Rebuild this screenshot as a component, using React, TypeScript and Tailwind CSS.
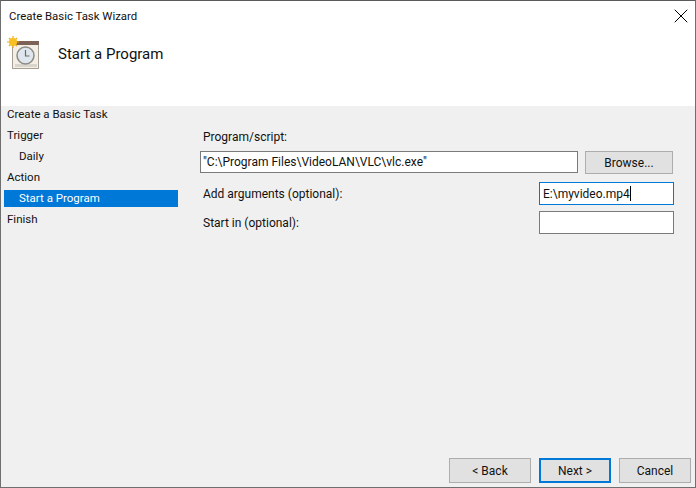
import { X } from "lucide-react";

const steps = [
  { label: "Create a Basic Task", indent: false },
  { label: "Trigger", indent: false },
  { label: "Daily", indent: true },
  { label: "Action", indent: false },
  { label: "Start a Program", indent: true, active: true },
  { label: "Finish", indent: false },
];

function TaskIcon() {
  return (
    <svg width="34" height="34" viewBox="0 0 34 34" className="shrink-0">
      <rect x="5.5" y="5.5" width="26" height="27" fill="#f3efe6" stroke="#a89f94" />
      <rect x="5" y="5" width="27" height="4" fill="#7d6257" />
      <rect x="8" y="28" width="22" height="3" fill="#d9d4cc" />
      <circle cx="18.5" cy="19.5" r="8.5" fill="#dfe6ee" stroke="#8c8c84" strokeWidth="1.5" />
      <path d="M18.5 14v6h4" fill="none" stroke="#6b6b6b" strokeWidth="1.2" />
      <g stroke="#f0a818" strokeWidth="1.2">
        <path d="M6 0v12M0 6h12M2 2l8 8M10 2L2 10" />
      </g>
      <circle cx="6" cy="6" r="4" fill="#f8c020" />
    </svg>
  );
}

function WizardButton({ label, primary, width }: { label: string; primary?: boolean; width: string }) {
  return (
    <button
      className={[
        "h-[25px] bg-[#e1e1e1] text-[12px] text-[#111]",
        width,
        primary ? "border-2 border-[#0078d7]" : "border border-[#adadad]",
      ].join(" ")}
    >
      {label}
    </button>
  );
}

export default function App() {
  return (
    <div
      className="flex h-[488px] w-[696px] flex-col overflow-hidden border-x border-t border-b border-x-[#6f6f6f] border-t-[#5a5a5a] border-b-[#6f6f6f] bg-white text-[12px] text-[#111]"
      style={{ fontFamily: 'Roboto, sans-serif' }}
    >
      {/* Title + header strip */}
      <div className="flex h-[105px] shrink-0 flex-col bg-white">
        <div className="flex h-[30px] items-center justify-between pl-[8px] pr-[2px]">
          <span className="pt-[1px] text-[11.4px]">Create Basic Task Wizard</span>
          <X size={24} strokeWidth={1} className="text-black" />
        </div>
        <div className="mt-[5px] flex items-center pl-[6px]">
          <TaskIcon />
          <span className="ml-[17px] pt-[2px] text-[15px]">Start a Program</span>
        </div>
      </div>

      <div className="flex min-h-0 flex-1 bg-[#f0f0f0]">
        {/* Steps rail */}
        <div className="w-[177px] shrink-0 pl-[3px] text-[11.5px]">
          {steps.map((s) => (
            <div
              key={s.label}
              className={[
                "mb-[4px] flex h-[17px] items-center",
                s.indent ? "pl-[15px]" : "pl-[3px]",
                s.active ? "bg-[#0078d7] text-white" : "",
              ].join(" ")}
            >
              {s.label}
            </div>
          ))}
        </div>

        {/* Form + buttons */}
        <div className="flex min-w-0 flex-1 flex-col">
          <div className="flex-1 pl-[22px] pt-[23px]">
            <div className="pl-[3px] leading-[17px]">Program/script:</div>
            <div className="mt-[5px] flex items-start">
              <div className="flex h-[22px] w-[378px] items-center border border-[#7a7a7a] bg-white pl-[2px]">
                "C:\Program Files\VideoLAN\VLC\vlc.exe"
              </div>
              <button className="ml-[7px] h-[23px] w-[88px] border border-[#adadad] bg-[#e1e1e1]">Browse...</button>
            </div>
            <div className="mt-[8px] flex items-center justify-between pr-[21px]">
              <span className="pl-[3px] pt-[1px]">Add arguments (optional):</span>
              <div className="flex h-[23px] w-[135px] items-center border border-[#0078d7] bg-white pl-[3px]">
                E:\myvideo.mp4
                <span className="h-[15px] w-px bg-black" />
              </div>
            </div>
            <div className="mt-[6px] flex items-center justify-between pr-[21px]">
              <span className="pl-[3px] pt-[1px]">Start in (optional):</span>
              <div className="h-[23px] w-[135px] border border-[#7a7a7a] bg-white" />
            </div>
          </div>
          <div className="flex justify-end gap-[8px] pb-[4px] pr-[4px]">
            <WizardButton label="< Back" width="w-[82px]" />
            <WizardButton label="Next >" width="w-[72px]" primary />
            <WizardButton label="Cancel" width="w-[72px]" />
          </div>
        </div>
      </div>
    </div>
  );
}
